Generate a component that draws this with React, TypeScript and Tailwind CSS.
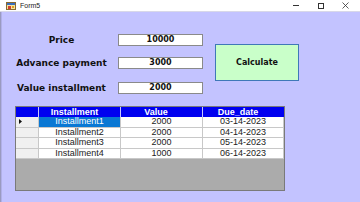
import React from "react";

const rows = [
  { n: "Installment1", v: "2000", d: "03-14-2023" },
  { n: "Installment2", v: "2000", d: "04-14-2023" },
  { n: "Installment3", v: "2000", d: "05-14-2023" },
  { n: "Installment4", v: "1000", d: "06-14-2023" },
];

function AppIcon() {
  return (
    <svg width="10" height="8" viewBox="0 0 10 8">
      <rect x="0.5" y="0.5" width="9" height="7" fill="#f3e3a0" stroke="#8a6a30" />
      <rect x="1" y="1" width="8" height="2" fill="#3a6fc0" />
      <rect x="2" y="4" width="3" height="3" fill="#d04030" />
      <rect x="6" y="4" width="2" height="2" fill="#e0a020" />
    </svg>
  );
}

export default function App() {
  return (
    <div className="w-[360px] h-[202px] flex flex-col bg-[#c3c3ff] overflow-hidden relative">
      {/* title bar */}
      <div className="h-[12px] bg-white flex items-center border-b border-[#d8d8e8] shrink-0">
        <div className="ml-[6px] flex items-center">
          <AppIcon />
        </div>
        <span className="ml-[4px] text-[7px] leading-none text-[#222] font-['Liberation_Sans',sans-serif]">Form5</span>
        <div className="ml-auto flex items-center h-full">
          <div className="w-[25px] flex justify-center">
            <div className="w-[6px] h-px bg-[#333]" />
          </div>
          <div className="w-[25px] flex justify-center">
            <div className="w-[6px] h-[6px] border border-[#333]" />
          </div>
          <div className="w-[25px] flex justify-center mr-[2px]">
            <svg width="7" height="7" viewBox="0 0 7 7">
              <path d="M0.5 0.5 L6.5 6.5 M6.5 0.5 L0.5 6.5" stroke="#333" strokeWidth="0.8" />
            </svg>
          </div>
        </div>
      </div>
      <div className="absolute left-0 top-[12px] w-[2px] h-[190px] bg-[#b0b0e8] border-l border-[#9a9ac0]" />

      {/* body */}
      <div className="flex-1 pl-[15px] pt-[22px]">
        <div className="flex">
          <div className="flex flex-col font-['DejaVu_Sans',sans-serif] font-bold">
            <div className="flex items-center h-[12px]">
              <div className="w-[93px] text-center text-[9px] text-[#111] leading-none">Price</div>
              <div className="ml-[10px] w-[85px] h-[12px] bg-white border border-[#8a8a8a] flex items-center justify-center text-[8px] leading-none text-[#111]">10000</div>
            </div>
            <div className="flex items-center h-[12px] mt-[11px]">
              <div className="w-[93px] text-center text-[9px] text-[#111] leading-none">Advance payment</div>
              <div className="ml-[10px] w-[85px] h-[12px] bg-white border border-[#8a8a8a] flex items-center justify-center text-[8px] leading-none text-[#111]">3000</div>
            </div>
            <div className="flex items-center h-[12px] mt-[13px]">
              <div className="w-[93px] text-center text-[9px] text-[#111] leading-none">Value installment</div>
              <div className="ml-[10px] w-[85px] h-[12px] bg-white border border-[#8a8a8a] flex items-center justify-center text-[8px] leading-none text-[#111]">2000</div>
            </div>
          </div>
          <div className="ml-[12px] mt-[10px] w-[84px] h-[37px] bg-[#c9ffc9] border border-[#3f78b8] flex items-center justify-center font-['DejaVu_Sans',sans-serif] font-bold text-[8px] text-[#111] leading-none">
            Calculate
          </div>
        </div>

        {/* grid */}
        <div className="mt-[12px] w-[270px] h-[85px] border border-[#7a7a7a] bg-[#ababab] flex flex-col font-['Liberation_Sans',sans-serif] text-[9px] leading-none">
          <div className="flex h-[10px] bg-[#0000f0] text-white font-bold">
            <div className="w-[23px] border-r border-[#c8c8ff]" />
            <div className="w-[82px] border-r border-[#c8c8ff] flex items-center justify-center pr-[10px]">Installment</div>
            <div className="w-[82px] border-r border-[#c8c8ff] flex items-center justify-center pr-[11px]">Value</div>
            <div className="w-[81px] flex items-center justify-center pr-[11px]">Due_date</div>
          </div>
          {rows.map((r, i) => (
            <div key={r.n} className="flex h-[10.5px] text-[#222]">
              <div className="w-[23px] bg-[#f0f0f0] border-r border-b border-[#c8c8c8] flex items-center pl-[3px]">
                {i === 0 && (
                  <svg width="3" height="5" viewBox="0 0 3 5">
                    <path d="M0 0 L3 2.5 L0 5 Z" fill="#111" />
                  </svg>
                )}
              </div>
              <div
                className={
                  i === 0
                    ? "w-[82px] bg-[#0a78d4] text-white border-r border-b border-[#c8c8c8] flex items-center justify-center"
                    : "w-[82px] bg-white border-r border-b border-[#c8c8c8] flex items-center justify-center"
                }
              >
                {r.n}
              </div>
              <div className="w-[82px] bg-white border-r border-b border-[#c8c8c8] flex items-center justify-center">{r.v}</div>
              <div className="w-[81px] bg-white border-r border-b border-[#c8c8c8] flex items-center justify-center">{r.d}</div>
            </div>
          ))}
        </div>
      </div>
    </div>
  );
}
